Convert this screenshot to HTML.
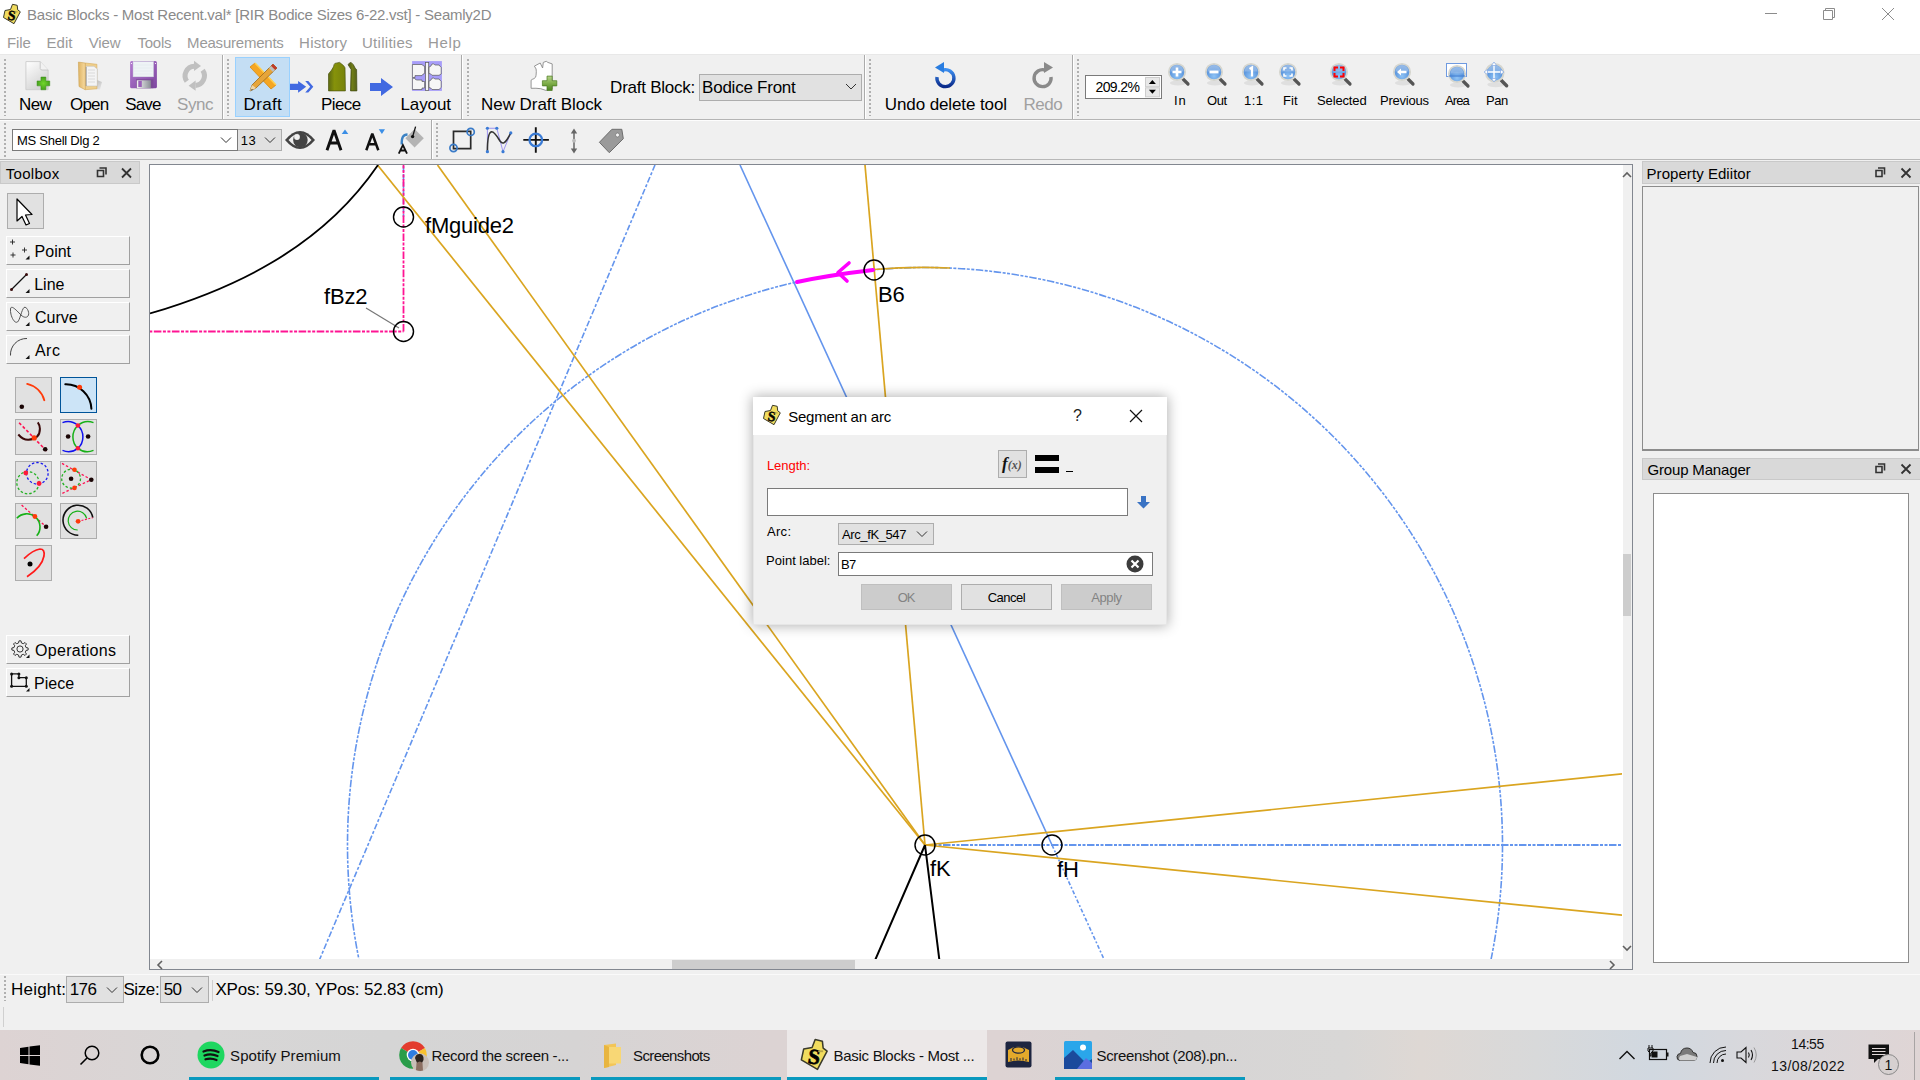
<!DOCTYPE html>
<html><head><meta charset="utf-8">
<style>
*{box-sizing:border-box;margin:0;padding:0}
html,body{width:1920px;height:1080px;overflow:hidden;background:#f0f0f0;font-family:"Liberation Sans",sans-serif;color:#000}
.a{position:absolute}
.t{position:absolute;white-space:nowrap;line-height:1}
svg{position:absolute;overflow:visible}
.grip{position:absolute;width:2px;background-image:linear-gradient(#b0b0b0 50%,transparent 50%);background-size:2px 4px;background-repeat:repeat-y}
.sep{position:absolute;width:1px;background:#ababab;box-shadow:1px 0 0 #fff}
.tb{font-size:17px}
.zl{font-size:13px}
.btn{position:absolute;background:#e1e1e1;border:1px solid #adadad}
.dbtn{position:absolute;background:#f0f0f0;border-top:1px solid #fff;border-left:1px solid #fff;border-right:1px solid #a0a0a0;border-bottom:1px solid #a0a0a0}
.ticon{position:absolute;width:37px;height:36px;background:#e1e1e1;border:1px solid #adadad}
</style></head><body>
<svg width="0" height="0" style="position:absolute">
<defs>
<symbol id="seamly" viewBox="0 0 30 30">
<path d="M3.5 17.5 L5 10.5 L10.5 9.5 L12.5 4.3 L17.2 5.3 L17.7 9.8 L20.3 11.8 L14 23.7 Z" fill="#f1dc5e" stroke="#3a3a2a" stroke-width="1" stroke-linejoin="round"/>
<text x="8" y="20" font-family="Liberation Serif" font-weight="bold" font-size="14" fill="#000" stroke="#000" stroke-width="0.5" transform="rotate(8 11 15)">S</text>
<path d="M14.5 11.9 L17.7 11.9" stroke="#b7a449" stroke-width="1.2"/>
</symbol>
</defs>
</svg>
<div class="a" style="left:0;top:0;width:1920px;height:54px;background:#fff"></div>
<div class="a" style="left:0;top:54px;width:1920px;height:1px;background:#e8e8e8"></div>
<svg style="left:0;top:0" width="30" height="30"><use href="#seamly"/></svg>
<div id="t_title" class="t" style="left:28px;top:7px;font-size:15px;color:#8a8a8a;letter-spacing:-0.24px">Basic Blocks - Most Recent.val* [RIR Bodice Sizes 6-22.vst] - Seamly2D</div>
<svg style="left:1750px;top:0" width="170" height="30">
<path d="M15 13.5 H27" stroke="#8c8c8c" stroke-width="1"/>
<path d="M73.5 10.5 h9 v9 h-9 z M75.5 10.5 v-2 h9 v9 h-2" fill="none" stroke="#8c8c8c" stroke-width="1"/>
<path d="M132 8 L144 20 M144 8 L132 20" stroke="#8c8c8c" stroke-width="1"/>
</svg>
<div id="m_file" class="t" style="left:8px;top:35px;font-size:15px;color:#9a9a9a">File</div>
<div id="m_edit" class="t" style="left:47px;top:35px;font-size:15px;color:#9a9a9a">Edit</div>
<div id="m_view" class="t" style="left:89px;top:35px;font-size:15px;color:#9a9a9a">View</div>
<div id="m_tools" class="t" style="left:137px;top:35px;font-size:15px;color:#9a9a9a">Tools</div>
<div id="m_meas" class="t" style="left:188px;top:35px;font-size:15px;color:#9a9a9a">Measurements</div>
<div id="m_hist" class="t" style="left:300px;top:35px;font-size:15px;color:#9a9a9a">History</div>
<div id="m_util" class="t" style="left:362px;top:35px;font-size:15px;color:#9a9a9a">Utilities</div>
<div id="m_help" class="t" style="left:429px;top:35px;font-size:15px;color:#9a9a9a">Help</div>
<div class="a" style="left:0;top:119px;width:1920px;height:1px;background:#b4b4b4"></div>
<div class="a" style="left:0;top:120px;width:1920px;height:1px;background:#fdfdfd"></div>
<!-- grips & separators -->
<div class="grip" style="left:4px;top:59px;height:57px"></div>
<div class="sep" style="left:222px;top:55px;height:64px"></div>
<div class="grip" style="left:227px;top:59px;height:57px"></div>
<div class="sep" style="left:461px;top:55px;height:64px"></div>
<div class="grip" style="left:467px;top:59px;height:57px"></div>
<div class="sep" style="left:864px;top:55px;height:64px"></div>
<div class="grip" style="left:869px;top:59px;height:57px"></div>
<div class="sep" style="left:1072px;top:55px;height:64px"></div>
<div class="grip" style="left:1077px;top:59px;height:57px"></div>
<!-- New -->
<svg style="left:24px;top:58px" width="30" height="34" viewBox="0 0 30 34">
<defs><linearGradient id="docg" x1="0" y1="0" x2="0.6" y2="1"><stop offset="0" stop-color="#ffffff"/><stop offset="1" stop-color="#d2d2d2"/></linearGradient>
<radialGradient id="plusr" cx="0.5" cy="0.5" r="0.6"><stop offset="0" stop-color="#72d62c"/><stop offset="1" stop-color="#3d9618"/></radialGradient></defs>
<path d="M1.9 3.6 H16.2 L24.1 12 V31.7 H1.9 Z" fill="url(#docg)" stroke="#cfcfcf" stroke-width="1"/>
<path d="M16.2 3.6 V10.5 Q16.5 12 18 12 H24.1" fill="#f2f2f2" stroke="#c4c4c4" stroke-width="0.9"/>
<path d="M16.95 19.05 h4.9 v3.9 h3.9 v4.9 h-3.9 v3.9 h-4.9 v-3.9 h-3.9 v-4.9 h3.9 z" fill="url(#plusr)" stroke="#3b8a1a" stroke-width="0.5"/>
</svg>
<!-- Open -->
<svg style="left:76px;top:58px" width="30" height="34" viewBox="0 0 30 34">
<defs><linearGradient id="fcov" x1="0" y1="0" x2="1" y2="0"><stop offset="0" stop-color="#deb466"/><stop offset="1" stop-color="#f8dba0"/></linearGradient>
<linearGradient id="shd" x1="0" y1="0" x2="1" y2="1"><stop offset="0" stop-color="#9a9a9a"/><stop offset="1" stop-color="#e8e8e8"/></linearGradient></defs>
<path d="M14 30.5 L21 22 L26 24 L24 31.5 Z" fill="url(#shd)" opacity="0.8"/>
<path d="M9.2 5 L20.9 6.3 V30.8 L9.2 31.7 Z" fill="#efcf8c" stroke="#d7ad5c" stroke-width="0.6"/>
<path d="M10 8.3 H18 L21.3 11 V28 H10 Z" fill="#f4f4f4" stroke="#b8b8b8" stroke-width="0.5"/>
<path d="M10 9 V28" stroke="#8a8a8a" stroke-width="1.6" opacity="0.6"/>
<path d="M12 12 H19 M12 15 H19 M12 18 H19 M12 21 H19 M12 24 H19" stroke="#c9c9c9" stroke-width="0.6"/>
<path d="M2.4 4.1 L9.2 5 V31.7 L3 28.5 Z" fill="url(#fcov)" stroke="#cfa456" stroke-width="0.6"/>
</svg>
<!-- Save -->
<svg style="left:129px;top:60px" width="30" height="32" viewBox="0 0 30 32">
<defs><linearGradient id="flp" x1="0" y1="0" x2="1" y2="1"><stop offset="0" stop-color="#b37bd0"/><stop offset="1" stop-color="#7d45a0"/></linearGradient>
<linearGradient id="mtl" x1="0" y1="0" x2="1" y2="0"><stop offset="0" stop-color="#f4f4f4"/><stop offset="1" stop-color="#8a8e96"/></linearGradient></defs>
<rect x="1.1" y="1" width="26.8" height="27.2" rx="1.5" fill="url(#flp)"/>
<rect x="4.1" y="1.7" width="20.3" height="15.1" fill="#eef3f6" stroke="#d8dfe4" stroke-width="0.5"/>
<path d="M5 5 H23.5 M5 8 H23.5 M5 11 H23.5 M5 14 H23.5" stroke="#dde5ea" stroke-width="0.5"/>
<rect x="7.1" y="19.3" width="17.3" height="8.9" fill="#7a4a96"/>
<rect x="7.8" y="20.3" width="14" height="7.9" fill="url(#mtl)"/>
<rect x="9.3" y="20.8" width="3.5" height="6.2" fill="#9b5fba"/>
<circle cx="2.5" cy="3.5" r="0.6" fill="#fff"/><circle cx="26.5" cy="3.5" r="0.6" fill="#fff"/>
</svg>
<!-- Sync -->
<svg style="left:179px;top:60px" width="32" height="32" viewBox="0 0 32 32">
<path d="M7.85 21.3 A9.6 9.6 0 0 1 15.3 6.2" fill="none" stroke="#c0c0c0" stroke-width="5"/>
<path d="M15 0.8 L22 5.9 L15 11 Z" fill="#c0c0c0"/>
<path d="M23.65 10.3 A9.6 9.6 0 0 1 16.5 25.4" fill="none" stroke="#c0c0c0" stroke-width="5"/>
<path d="M16.6 20.6 L9.6 25.7 L16.6 30.8 Z" fill="#c0c0c0"/>
</svg>
<div id="l_new" class="t tb" style="left:20px;top:96px">New</div>
<div id="l_open" class="t tb" style="left:70px;top:96px">Open</div>
<div id="l_save" class="t tb" style="left:126px;top:96px">Save</div>
<div id="l_sync" class="t tb" style="left:178px;top:96px;color:#a0a0a0">Sync</div>
<!-- Draft -->
<div class="a" style="left:235px;top:57px;width:55px;height:60px;background:#c4def4;border:1px solid #99d1ff"></div>
<svg style="left:247px;top:61px" width="32" height="32" viewBox="0 0 32 32">
<path d="M3 6 L8 2 L29 24 L24 28 Z" fill="#f5a623" stroke="#d9890f" stroke-width="0.8"/>
<path d="M8 2 L29 24" stroke="#ffd050" stroke-width="1.5"/>
<path d="M26 3 L30 7 L9 27 L3 30 L5 24 Z" fill="#e6a53a" stroke="#9b6a1d" stroke-width="0.8"/>
<path d="M26 3 L30 7 L28 9 L24 5 Z" fill="#c0392b"/>
<path d="M24 5 L28 9 L26 11 L22 7 Z" fill="#bdbdbd"/>
<path d="M5 24 L9 27 L3 30 Z" fill="#f0d6a8"/>
<path d="M3.5 29.5 L5 28 L6 29 Z" fill="#333"/>
</svg>
<div id="l_draft" class="t tb" style="left:244px;top:96px">Draft</div>
<svg style="left:289px;top:79px" width="26" height="16" viewBox="0 0 26 16">
<path d="M1 4.8 H9.1 V1.9 L17.2 7.85 L9.1 13.8 V11.1 H1 Z" fill="#4169e1"/>
<path d="M16.2 2.1 H19.3 L24.3 7.85 L19.3 13.6 H16.2 L21.2 7.85 Z" fill="#4169e1"/>
</svg>
<!-- Piece -->
<svg style="left:327px;top:61px" width="32" height="32" viewBox="0 0 32 32">
<defs><linearGradient id="olv" x1="0" y1="0" x2="1" y2="0"><stop offset="0" stop-color="#5d6a12"/><stop offset="0.35" stop-color="#86920a"/><stop offset="1" stop-color="#77820c"/></linearGradient>
<linearGradient id="olv2" x1="0" y1="0" x2="1" y2="0"><stop offset="0" stop-color="#4f5a14"/><stop offset="0.5" stop-color="#6f7c18"/><stop offset="1" stop-color="#56621a"/></linearGradient></defs>
<path d="M1.5 29.9 V12.9 Q5 9 6.5 5.8 Q7 3 7.9 2.4 L12.6 1.4 L14.7 3.1 Q17 4.5 18 6.8 L18.4 29.9 Z" fill="url(#olv)" stroke="#4e5610" stroke-width="0.7"/>
<path d="M21.1 3.8 Q22 1.5 24.1 1.4 Q26.5 3 28.2 7.2 L29.6 8.5 L29.9 29.9 H23.5 L24.1 8.5 Q22.5 6 21.1 3.8 Z" fill="url(#olv2)" stroke="#3f4710" stroke-width="0.7"/>
</svg>
<div id="l_piece" class="t tb" style="left:322px;top:96px">Piece</div>
<svg style="left:369px;top:77px" width="26" height="20" viewBox="0 0 26 20">
<path d="M1 6 H12 V1 L24 10 L12 19 V14 H1 Z" fill="#4169e1"/>
</svg>
<!-- Layout -->
<svg style="left:411px;top:60px" width="32" height="32" viewBox="0 0 32 32">
<rect x="1.1" y="1.1" width="29.8" height="29.8" fill="#a79df9"/>
<path d="M1.4 4.5 H11 Q12 6 13.6 6 V13.5 Q12 13.5 11 15.6 H4 V17.5 H1.4 Z" fill="#f6f6f6" stroke="#5a5a5a" stroke-width="0.7"/>
<path d="M1.4 18.3 H4 Q4 20 6 20 H11 V21.5 H13.6 V28 H11 V29.5 H1.4 Z" fill="#f6f6f6" stroke="#5a5a5a" stroke-width="0.7"/>
<rect x="14.6" y="2.4" width="3.1" height="28.1" fill="#f6f6f6" stroke="#5a5a5a" stroke-width="0.7"/>
<path d="M18 7 Q20 7 21 4 Q23 3.4 24 5 H28 L30.2 7.5 V14 L28 15.3 H21 Q20 13.5 18 13.5 Z" fill="#f6f6f6" stroke="#5a5a5a" stroke-width="0.7"/>
<path d="M18 21 Q20 21 21 18.2 Q23 17.5 24 19 H28 L30.2 21.5 V27.5 L28 29.5 H21 Q20 27.5 18 27.5 Z" fill="#f6f6f6" stroke="#5a5a5a" stroke-width="0.7"/>
</svg>
<div id="l_layout" class="t tb" style="left:402px;top:96px">Layout</div>
<!-- New Draft Block -->
<svg style="left:528px;top:58px" width="34" height="36" viewBox="0 0 34 36">
<defs><linearGradient id="plusg" x1="0" y1="0" x2="0" y2="1"><stop offset="0" stop-color="#b5d38a"/><stop offset="0.5" stop-color="#7fae4a"/><stop offset="1" stop-color="#4b8420"/></linearGradient></defs>
<path d="M3.1 22.2 V30.3 Q8 30 12.7 30.7 L17.9 32.4 L24.2 31 V5.9 L19.8 4.4 L18.3 3.3 L15.3 4.4 L14.6 10 L12.2 5 L6.4 8.1 Q8.8 11 8.3 13.7 Q8.2 18 7.6 19.2 Q6 21 4.2 21.4 Z" fill="#fff" stroke="#8a8a8a" stroke-width="0.9" stroke-linejoin="round"/>
<path d="M19 18.1 H24.2 V22.7 H28.8 V27.9 H24.2 V32.5 H19 V27.9 H14.4 V22.7 H19 Z" fill="url(#plusg)" stroke="#4a7a20" stroke-width="0.7"/>
</svg>
<div id="l_ndb" class="t tb" style="left:482px;top:96px">New Draft Block</div>
<div id="l_db" class="t tb" style="left:611px;top:79px">Draft Block:</div>
<div class="a" style="left:699px;top:74px;width:163px;height:27px;background:#e1e1e1;border:1px solid #adadad"></div>
<div id="l_bf" class="t tb" style="left:703px;top:79px">Bodice Front</div>
<svg style="left:844px;top:82px" width="14" height="10"><path d="M2 2 L7 7 L12 2" fill="none" stroke="#333" stroke-width="1"/></svg>
<!-- Undo / Redo -->
<svg style="left:932px;top:60px" width="28" height="32" viewBox="0 0 28 32">
<defs><linearGradient id="undog" x1="0" y1="0" x2="0" y2="1"><stop offset="0" stop-color="#3d8ff0"/><stop offset="1" stop-color="#0b2a8a"/></linearGradient></defs>
<path d="M11 10 A8.5 8.5 0 1 1 5 17" fill="none" stroke="url(#undog)" stroke-width="3.4"/>
<path d="M3 7.5 L12 2 L12 13 Z" fill="#2a7de0"/>
</svg>
<div id="l_undo" class="t tb" style="left:885px;top:96px">Undo delete tool</div>
<svg style="left:1028px;top:60px" width="28" height="32" viewBox="0 0 28 32">
<path d="M17 10 A8.5 8.5 0 1 0 23 17" fill="none" stroke="#8a8a8a" stroke-width="3.4"/>
<path d="M25 7.5 L16 2 L16 13 Z" fill="#8a8a8a"/>
</svg>
<div id="l_redo" class="t tb" style="left:1025px;top:96px;color:#a0a0a0">Redo</div>
<!-- zoom spin -->
<div class="a" style="left:1085px;top:75px;width:77px;height:24px;background:#fff;border:1px solid #7a7a7a"></div>
<div id="l_zoom" class="t" style="left:1096px;top:80px;font-size:14px">209.2%</div>
<svg style="left:1145px;top:77px" width="16" height="21" viewBox="0 0 16 21"><rect x="0.5" y="0.5" width="14" height="9.2" fill="#e8e8e8" stroke="#cdcdcd"/><rect x="0.5" y="10.8" width="14" height="9" fill="#e8e8e8" stroke="#cdcdcd"/><path d="M3.9 7 L7.4 3 L10.9 7 Z" fill="#000"/><path d="M3.9 12.8 L7.4 16.7 L10.9 12.8 Z" fill="#000"/></svg>
<svg width="0" height="0" style="position:absolute"><defs>
<radialGradient id="lensg" cx="0.5" cy="0.75" r="0.7"><stop offset="0" stop-color="#8fc3f5"/><stop offset="0.6" stop-color="#5e98de"/><stop offset="1" stop-color="#79a7e0"/></radialGradient>
<symbol id="mag" viewBox="0 0 26 26">
<ellipse cx="11" cy="21" rx="8" ry="2.5" fill="#000" opacity="0.07"/>
<path d="M15.5 16.5 L21 22" stroke="#555" stroke-width="3.2" stroke-linecap="round"/>
<circle cx="10" cy="10" r="8.2" fill="url(#lensg)" stroke="#d6d6cf" stroke-width="1.8"/>
<path d="M3.5 9.5 A6.5 6.5 0 0 1 16.5 9.5" fill="#fff" opacity="0.25"/>
</symbol>
</defs></svg>
<svg style="left:1167px;top:62px" width="26" height="26"><use href="#mag"/><path d="M10 5.5 V14.5 M5.5 10 H14.5" stroke="#fff" stroke-width="2.6"/></svg>
<svg style="left:1204px;top:62px" width="26" height="26"><use href="#mag"/><path d="M5.5 10 H14.5" stroke="#fff" stroke-width="2.8"/></svg>
<svg style="left:1241px;top:62px" width="26" height="26"><use href="#mag"/><path d="M8.5 7 L11 5.5 V14.5" fill="none" stroke="#fff" stroke-width="2.2"/></svg>
<svg style="left:1278px;top:62px" width="26" height="26"><use href="#mag"/><path d="M6 8.5 V6 H8.5 M11.5 6 H14 V8.5 M14 11.5 V14 H11.5 M8.5 14 H6 V11.5" fill="none" stroke="#fff" stroke-width="1.6"/></svg>
<svg style="left:1329px;top:62px" width="26" height="26"><use href="#mag"/><path d="M5.5 9 V5.5 H9 M11 5.5 H14.5 V9 M14.5 11 V14.5 H11 M9 14.5 H5.5 V11" fill="none" stroke="#f00" stroke-width="2"/></svg>
<svg style="left:1392px;top:62px" width="26" height="26"><use href="#mag"/><path d="M5 10 L9 6.5 V8.7 H14.5 V11.3 H9 V13.5 Z" fill="#fff"/></svg>
<svg style="left:1444px;top:62px" width="30" height="28"><rect x="2.5" y="1.5" width="20" height="13" fill="#fff" stroke="#6f9ae0" stroke-width="1"/><g transform="translate(3,2)"><use href="#mag" width="26" height="26"/></g><path d="M5 14 H21" stroke="#3d78cf" stroke-width="1"/></svg>
<svg style="left:1484px;top:62px" width="28" height="28"><use href="#mag"/><path d="M10 1 V19 M1 10 H19" stroke="#fff" stroke-width="1.4"/><path d="M10 0 L12.5 3.5 H7.5 Z M10 20 L12.5 16.5 H7.5 Z M0 10 L3.5 7.5 V12.5 Z M20 10 L16.5 7.5 V12.5 Z" fill="#fff" stroke="#6f9ae0" stroke-width="0.6"/></svg>
<div id="z_in" class="t zl" style="left:1175px;top:94px">In</div>
<div id="z_out" class="t zl" style="left:1207px;top:94px">Out</div>
<div id="z_11" class="t zl" style="left:1245px;top:94px">1:1</div>
<div id="z_fit" class="t zl" style="left:1284px;top:94px">Fit</div>
<div id="z_sel" class="t zl" style="left:1317px;top:94px">Selected</div>
<div id="z_prev" class="t zl" style="left:1381px;top:94px">Previous</div>
<div id="z_area" class="t zl" style="left:1445px;top:94px">Area</div>
<div id="z_pan" class="t zl" style="left:1487px;top:94px">Pan</div>
<div class="a" style="left:0;top:159px;width:1920px;height:1px;background:#b8b8b8"></div>
<div class="grip" style="left:4px;top:123px;height:35px"></div>
<div class="a" style="left:12px;top:129px;width:226px;height:22px;background:#fff;border:1px solid #7a7a7a"></div>
<div id="f_font" class="t" style="left:17px;top:134px;font-size:13px">MS Shell Dlg 2</div>
<svg style="left:219px;top:135px" width="14" height="10"><path d="M2 2.5 L7 7.5 L12 2.5" fill="none" stroke="#333" stroke-width="1"/></svg>
<div class="a" style="left:238px;top:129px;width:44px;height:22px;background:#e1e1e1;border:1px solid #adadad;border-left:none"></div>
<div id="f_size" class="t" style="left:242px;top:134px;font-size:13px">13</div>
<svg style="left:263px;top:135px" width="14" height="10"><path d="M2 2.5 L7 7.5 L12 2.5" fill="none" stroke="#333" stroke-width="1"/></svg>
<!-- eye -->
<svg style="left:284px;top:128px" width="32" height="24" viewBox="0 0 32 24">
<path d="M1 12 Q16 -6 31 12 Q16 30 1 12 Z" fill="#444"/>
<path d="M4.5 12 Q16 -1.5 27.5 12 Q16 25.5 4.5 12 Z" fill="#f0f0f0"/>
<circle cx="16.4" cy="12" r="7.3" fill="#444"/>
<circle cx="13" cy="9" r="2.9" fill="#f0f0f0"/>
</svg>
<!-- A up -->
<svg style="left:324px;top:126px" width="28" height="28" viewBox="0 0 28 28">
<path d="M3 24.3 L10 4.2 L17 24.3 M5.6 17 H14.4" fill="none" stroke="#111" stroke-width="2.9" stroke-linejoin="bevel"/>
<path d="M17.7 8 L21 3.6 L24.3 8 Z" fill="#3a8ee6"/>
</svg>
<svg style="left:362px;top:126px" width="28" height="28" viewBox="0 0 28 28">
<path d="M4.3 24.3 L10.3 7.8 L16.3 24.3 M6.5 18.3 H14.1" fill="none" stroke="#111" stroke-width="2.5" stroke-linejoin="bevel"/>
<path d="M16.75 3.3 L23 3.3 L19.9 8 Z" fill="#3a8ee6"/>
</svg>
<!-- paint -->
<svg style="left:396px;top:125px" width="32" height="32" viewBox="0 0 32 32">
<path d="M18.6 4 L27.8 13.25 L18.6 22.5 L9.4 13.25 Z" fill="#b4b4b4"/>
<path d="M19.6 1.6 L16.6 11.6" stroke="#111" stroke-width="1.3"/><circle cx="16.6" cy="11.6" r="1.7" fill="#111"/>
<path d="M5.7 19.5 C5.5 12.5 7 9.5 11.5 9.5" fill="none" stroke="#3b82c4" stroke-width="2.3"/>
<path d="M2.75 28.7 L6.9 20 L11 28.7 M4.3 25.5 H9.5" fill="none" stroke="#111" stroke-width="1.8"/>
</svg>
<div class="sep" style="left:431px;top:120px;height:39px"></div>
<div class="grip" style="left:436px;top:123px;height:35px"></div>
<!-- rect with circles -->
<svg style="left:447px;top:126px" width="30" height="30" viewBox="0 0 30 30">
<path d="M6.5 5.4 H23.7 V22.6 H6.5 Z" fill="none" stroke="#2a2a2a" stroke-width="1.7"/>
<circle cx="23.7" cy="5.9" r="3.6" fill="none" stroke="#3a7bc8" stroke-width="1.7"/>
<circle cx="6.5" cy="22" r="3.6" fill="none" stroke="#3a7bc8" stroke-width="1.7"/>
</svg>
<!-- curve -->
<svg style="left:484px;top:125px" width="30" height="32" viewBox="0 0 30 32">
<path d="M3.4 26.7 V3.25 H12.8 L19 26.7 L26.8 7.9" fill="none" stroke="#7a6cf0" stroke-width="0.7"/>
<path d="M3.4 26.7 C3.4 -2 10 6 16 16 C18.5 19.5 21 19.5 26.8 7.9" fill="none" stroke="#333" stroke-width="1.6"/>
<circle cx="3.4" cy="26.7" r="1.6" fill="#3a7bd5"/><circle cx="3.4" cy="3.25" r="1.6" fill="#3a7bd5"/><circle cx="12.8" cy="3.25" r="1.6" fill="#3a7bd5"/><circle cx="19" cy="26.7" r="1.6" fill="#3a7bd5"/><circle cx="26.8" cy="7.9" r="1.6" fill="#3a7bd5"/>
</svg>
<!-- crosshair -->
<svg style="left:521px;top:125px" width="30" height="30" viewBox="0 0 30 30">
<path d="M14.8 2.2 V27.7 M2.3 14.9 H27.9" stroke="#111" stroke-width="1.9"/>
<circle cx="14.8" cy="14.9" r="6.3" fill="none" stroke="#3a7bd5" stroke-width="2.3"/>
</svg>
<!-- vertical arrows -->
<svg style="left:566px;top:126px" width="16" height="30" viewBox="0 0 16 30">
<path d="M8 4 V26" stroke="#666" stroke-width="1.5"/>
<path d="M8 2.5 L11.2 7.5 H4.8 Z M8 27.5 L11.2 22.5 H4.8 Z" fill="#666"/>
<circle cx="8" cy="14.75" r="1.9" fill="#bbb"/>
</svg>
<!-- tag -->
<svg style="left:596px;top:126px" width="32" height="30" viewBox="0 0 32 30">
<path d="M3.4 16.3 L15.9 3.3 H25.8 L27.3 12.7 L13.3 26.7 Z" fill="#9a9a9a" stroke="#6e6e6e" stroke-width="1" stroke-linejoin="round"/>
<circle cx="21.5" cy="9" r="2" fill="#f4f4f4" stroke="#666" stroke-width="0.6"/>
</svg>
<!-- Toolbox dock -->
<div class="a" style="left:0;top:161px;width:140px;height:23px;background:#d9d9d9;border:1px solid #c9c9c9"></div>
<div id="d_tb" class="t" style="left:6px;top:166px;font-size:15px;color:#000">Toolbox</div>
<svg style="left:94px;top:166px" width="40" height="14" viewBox="0 0 40 14">
<path d="M3.5 4.5 h6 v6 h-6 z" fill="none" stroke="#333" stroke-width="1.6"/>
<path d="M5.5 2 h6.5 v6.5" fill="none" stroke="#333" stroke-width="1.6"/>
<path d="M28 2.5 L37 11.5 M37 2.5 L28 11.5" stroke="#333" stroke-width="1.8"/>
</svg>
<div class="btn" style="left:7px;top:193px;width:37px;height:36px"></div>
<svg style="left:14px;top:196px" width="24" height="32" viewBox="0 0 24 32">
<path d="M3 3 L3 25 L8 20.5 L12 29 L15.5 27.5 L11.5 19 L18 18.5 Z" fill="#fff" stroke="#000" stroke-width="1.2" stroke-linejoin="round"/>
</svg>
<!-- Point / Line / Curve / Arc -->
<div class="dbtn" style="left:6px;top:236px;width:124px;height:29px"></div>
<div class="dbtn" style="left:6px;top:269px;width:124px;height:29px"></div>
<div class="dbtn" style="left:6px;top:302px;width:124px;height:29px"></div>
<div class="dbtn" style="left:6px;top:335px;width:124px;height:29px"></div>
<svg style="left:6px;top:236px" width="30" height="29" viewBox="0 0 30 29">
<path d="M6.5 3.5 v5 M4 6 h5 M7 16.5 v5 M4.5 19 h5 M18.5 11.5 v5 M16 14 h5" stroke="#222" stroke-width="0.9"/>
<path d="M19.5 23.5 L23.5 19.5 V23.5 Z" fill="#111"/>
</svg>
<svg style="left:6px;top:269px" width="30" height="29" viewBox="0 0 30 29">
<path d="M5.5 20.5 L20.5 5.5" stroke="#111" stroke-width="1.2"/><circle cx="5.5" cy="20.5" r="1.5" fill="#3b0d0d"/><circle cx="20.5" cy="5.5" r="1.5" fill="#3b0d0d"/>
<path d="M19.5 24 L23.5 20 V24 Z" fill="#111"/>
</svg>
<svg style="left:6px;top:302px" width="30" height="29" viewBox="0 0 30 29">
<path d="M4.5 7 C4 13 8 22 11.5 20 C14 18 15.5 8 18 5.5 C20.5 4 23.5 10 22.5 13 C21.5 16 18 16 15 13 C11 9 5 2 4.5 7 Z" fill="none" stroke="#444" stroke-width="0.9"/>
<path d="M19.5 24 L23.5 20 V24 Z" fill="#111"/>
</svg>
<svg style="left:6px;top:335px" width="30" height="29" viewBox="0 0 30 29">
<path d="M4.5 20.5 A16 16 0 0 1 21 3.5" fill="none" stroke="#444" stroke-width="1"/>
<path d="M19.5 24 L23.5 20 V24 Z" fill="#111"/>
</svg>
<div id="b_point" class="t" style="left:35px;top:244px;font-size:16px">Point</div>
<div id="b_line" class="t" style="left:34px;top:277px;font-size:16px">Line</div>
<div id="b_curve" class="t" style="left:35px;top:310px;font-size:16px">Curve</div>
<div id="b_arc" class="t" style="left:35px;top:343px;font-size:16px">Arc</div>
<!-- arc tools grid -->
<div class="ticon" style="left:15px;top:377px"></div>
<div class="ticon" style="left:60px;top:377px;background:#cce4f7;border:1px solid #005499"></div>
<div class="ticon" style="left:15px;top:419px"></div>
<div class="ticon" style="left:60px;top:419px"></div>
<div class="ticon" style="left:15px;top:461px"></div>
<div class="ticon" style="left:60px;top:461px"></div>
<div class="ticon" style="left:15px;top:503px"></div>
<div class="ticon" style="left:60px;top:503px"></div>
<div class="ticon" style="left:15px;top:545px"></div>
<svg style="left:15px;top:377px" width="37" height="36" viewBox="0 0 37 36">
<path d="M12.2 6.9 A23.4 23.4 0 0 1 29.3 23.2" fill="none" stroke="#ff3b0a" stroke-width="1.9" stroke-linecap="round"/>
<circle cx="6.8" cy="29.7" r="2.3" fill="#1a0505"/>
</svg>
<svg style="left:60px;top:377px" width="37" height="36" viewBox="0 0 37 36">
<path d="M5.3 7.3 A25.5 25.5 0 0 1 31.4 31.8" fill="none" stroke="#000" stroke-width="2" stroke-linecap="round"/>
<circle cx="19.6" cy="10.2" r="2.5" fill="#ff3b0a"/>
</svg>
<svg style="left:15px;top:419px" width="37" height="36" viewBox="0 0 37 36">
<path d="M4.1 3.7 L33 33.4" stroke="#ff1050" stroke-width="1.6" stroke-dasharray="3 2.2"/>
<path d="M3.3 15.5 Q8 21 13.4 20.8 Q25 20 24.9 9.8 Q24.8 6 22.8 3.3" fill="none" stroke="#3a0808" stroke-width="2"/>
<circle cx="19.2" cy="18.9" r="2.6" fill="#ff3b0a"/>
<circle cx="30.2" cy="30.2" r="2.3" fill="#1a0505"/>
</svg>
<svg style="left:60px;top:419px" width="37" height="36" viewBox="0 0 37 36">
<path d="M2.5 3.6 A15.5 15.5 0 0 1 17.9 6.5 A15.5 15.5 0 0 1 17.9 29.3 A15.5 15.5 0 0 1 2.5 31.4" fill="none" stroke="#1010ee" stroke-width="1.5"/>
<path d="M33.5 3.6 A15.5 15.5 0 0 0 17.9 6.5 A15.5 15.5 0 0 0 17.9 29.3 A15.5 15.5 0 0 0 33.5 31.4" fill="none" stroke="#17b017" stroke-width="1.5"/>
<circle cx="17.9" cy="6.5" r="2.3" fill="#ff1a3a"/><circle cx="17.9" cy="29.3" r="2.3" fill="#ff1a3a"/>
<circle cx="8.1" cy="17.5" r="2.3" fill="#1a0505"/><circle cx="28.1" cy="17.5" r="2.3" fill="#1a0505"/>
</svg>
<svg style="left:15px;top:461px" width="37" height="36" viewBox="0 0 37 36">
<circle cx="12.9" cy="21.7" r="11.1" fill="none" stroke="#22b022" stroke-width="1.3" stroke-dasharray="2.5 2"/>
<circle cx="22.3" cy="12.3" r="10.8" fill="none" stroke="#1a1aee" stroke-width="1.3" stroke-dasharray="2.5 2"/>
<circle cx="10.8" cy="12" r="2.4" fill="#ff1a3a"/><circle cx="24.1" cy="22.5" r="2.4" fill="#ff1a3a"/>
</svg>
<svg style="left:60px;top:461px" width="37" height="36" viewBox="0 0 37 36">
<path d="M2 2.4 L31.3 18.7 L2 32.5" fill="none" stroke="#ff1050" stroke-width="1.3" stroke-dasharray="2.5 2"/>
<circle cx="11.1" cy="17.7" r="9.4" fill="none" stroke="#22b022" stroke-width="1.3" stroke-dasharray="2.5 2"/>
<circle cx="11.1" cy="17.7" r="2.3" fill="#1a0505"/><circle cx="31.3" cy="18.7" r="2.3" fill="#1a0505"/>
<circle cx="14.5" cy="8.8" r="2.3" fill="#ff3b0a"/><circle cx="14.5" cy="26.9" r="2.3" fill="#ff3b0a"/>
</svg>
<svg style="left:15px;top:503px" width="37" height="36" viewBox="0 0 37 36">
<path d="M6.6 2 L31.1 23.7" stroke="#ff1050" stroke-width="1.3" stroke-dasharray="2.5 2"/>
<path d="M1.8 15.3 A12 12 0 0 1 21.7 32.8" fill="none" stroke="#17b017" stroke-width="1.6"/>
<circle cx="19.9" cy="13.5" r="2.4" fill="#ff3b0a"/><circle cx="31.1" cy="23.7" r="2.3" fill="#1a0505"/>
</svg>
<svg style="left:60px;top:503px" width="37" height="36" viewBox="0 0 37 36">
<path d="M32.8 14.7 A15 15 0 1 0 18.3 32.2" fill="none" stroke="#111" stroke-width="1.6"/>
<path d="M26.7 15.3 A9.4 9.4 0 1 0 17.7 27" fill="none" stroke="#17b017" stroke-width="1.2"/>
<path d="M18.1 18.3 L32.8 14.7" stroke="#ff1050" stroke-width="1.1" stroke-dasharray="2 1.5"/>
<circle cx="18.1" cy="18.3" r="2.4" fill="#ff3b0a"/>
</svg>
<svg style="left:15px;top:545px" width="37" height="36" viewBox="0 0 37 36">
<path d="M9 13.6 Q18 5 25 4 Q30 4 29 11 Q27 22 12 31.7" fill="none" stroke="#ff1a1a" stroke-width="1.7"/>
<circle cx="15" cy="19" r="2.5" fill="#000"/>
</svg>
<!-- Operations / Piece -->
<div class="dbtn" style="left:6px;top:635px;width:124px;height:29px"></div>
<div class="dbtn" style="left:6px;top:668px;width:124px;height:29px"></div>
<svg style="left:10px;top:640px" width="22" height="22" viewBox="0 0 22 22">
<path d="M18.14 7.97 L18.14 10.03 L16.03 10.45 L15.29 12.24 L16.48 14.03 L15.03 15.48 L13.24 14.29 L11.45 15.03 L11.03 17.14 L8.97 17.14 L8.55 15.03 L6.76 14.29 L4.97 15.48 L3.52 14.03 L4.71 12.24 L3.97 10.45 L1.86 10.03 L1.86 7.97 L3.97 7.55 L4.71 5.76 L3.52 3.97 L4.97 2.52 L6.76 3.71 L8.55 2.97 L8.97 0.86 L11.03 0.86 L11.45 2.97 L13.24 3.71 L15.03 2.52 L16.48 3.97 L15.29 5.76 L16.03 7.55 Z" fill="none" stroke="#333" stroke-width="1" stroke-linejoin="round"/><circle cx="10" cy="9" r="3.1" fill="none" stroke="#333" stroke-width="1"/>
<path d="M16 18 L19.5 14.5 V18 Z" fill="#111"/>
</svg>
<svg style="left:10px;top:670px" width="22" height="24" viewBox="0 0 22 24">
<path d="M1.6 3.9 H8.9 V7.7 H16.3 V16.3 H1.6 Z" fill="none" stroke="#111" stroke-width="1.3"/>
<circle cx="1.6" cy="3.9" r="1.5" fill="#111"/><circle cx="8.9" cy="3.9" r="1.5" fill="#111"/><circle cx="8.9" cy="7.7" r="1.5" fill="#111"/><circle cx="16.3" cy="7.7" r="1.5" fill="#111"/><circle cx="16.3" cy="16.3" r="1.5" fill="#111"/><circle cx="1.6" cy="16.3" r="1.5" fill="#111"/>
<path d="M16 21.5 L19.5 18 V21.5 Z" fill="#111"/>
</svg>
<div id="b_ops" class="t" style="left:35px;top:643px;font-size:16px">Operations</div>
<div id="b_piece" class="t" style="left:35px;top:676px;font-size:16px">Piece</div>
<!-- canvas -->
<div class="a" style="left:149px;top:164px;width:1484px;height:806px;background:#f0f0f0;border:1px solid #828790"></div>
<svg style="left:0;top:0" width="1920" height="1080">
<defs><clipPath id="cv"><rect x="150" y="165" width="1472" height="794"/></clipPath></defs>
<rect x="150" y="165" width="1473" height="794" fill="#fff"/>
<g clip-path="url(#cv)" fill="none">
<!-- big dash-dot circle -->
<circle cx="925" cy="845" r="577.5" stroke="#6495ed" stroke-width="1.6" stroke-dasharray="7.5 1.5 3 1.5 3 1.5"/>
<!-- blue dashed lines -->
<path d="M655 165 L316 968" stroke="#6495ed" stroke-width="1.6" stroke-dasharray="6 2 3 2"/>
<path d="M403.5 150 L403.5 217" stroke="#6495ed" stroke-width="1.6" stroke-dasharray="6 2"/>
<path d="M740 165 L1052 845" stroke="#6495ed" stroke-width="1.6"/>
<path d="M1052 845 L1108 968" stroke="#6495ed" stroke-width="1.6" stroke-dasharray="4 2 2 2"/>
<path d="M925 845 L1630 845" stroke="#6495ed" stroke-width="2" stroke-dasharray="7.5 1.5 3 1.5 3 1.5"/>
<!-- magenta dash-dot -->
<path d="M403.5 331.5 L403.5 150" stroke="#ff1493" stroke-width="1.8" stroke-dasharray="7.6 1.5 3 1.5 3 1.5"/>
<path d="M150 331.5 L403.5 331.5" stroke="#ff1493" stroke-width="1.8" stroke-dasharray="7.6 1.5 3 1.5 3 1.5" stroke-dashoffset="14.3"/>
<!-- orange lines -->
<g stroke="#daa520" stroke-width="1.7">
<path d="M377.5 165 L925 845"/>
<path d="M437.5 165 L925 845"/>
<path d="M865 165 L925 845"/>
<path d="M925 845 L1625 773.5"/>
<path d="M925 845 L1625 915.5"/>
<path d="M874 269.5 A577.5 577.5 0 0 1 950 268"/>
</g>
<!-- black curve -->
<path d="M150 313.5 C230 290 320 250 378 165" stroke="#000" stroke-width="1.8"/>
<path d="M925 845 L873 965 M925 845 L940 965" stroke="#000" stroke-width="2"/>
<!-- leader -->
<path d="M366 308 L399 328" stroke="#777" stroke-width="1.2"/>
<!-- magenta arrow -->
<path d="M797 282 Q830 275 873 270" stroke="#ff00ff" stroke-width="4" stroke-linecap="round"/>
<path d="M849 263 L838 272.5 L847 281" stroke="#ff00ff" stroke-width="3.6" stroke-linecap="round" stroke-linejoin="round"/>
<!-- circles -->
<g stroke="#000" stroke-width="1.45">
<circle cx="403.5" cy="217" r="10"/>
<circle cx="403.5" cy="331.5" r="10"/>
<circle cx="874" cy="270" r="10"/>
<circle cx="925" cy="845" r="10"/>
<circle cx="1052" cy="845" r="10"/>
</g>
</g>
<g font-family="Liberation Sans" font-size="22" fill="#000" letter-spacing="-0.2">
<text x="425" y="233">fMguide2</text>
<text x="324" y="304">fBz2</text>
<text x="878" y="302">B6</text>
<text x="930" y="876">fK</text>
<text x="1057" y="877">fH</text>
</g>
</svg>
<!-- scrollbars -->
<div class="a" style="left:1623px;top:165px;width:9px;height:794px;background:#f0f0f0"></div>
<div class="a" style="left:150px;top:959px;width:1482px;height:10px;background:#f0f0f0"></div>
<div class="a" style="left:1623px;top:554px;width:8px;height:62px;background:#cdcdcd"></div>
<div class="a" style="left:672px;top:960px;width:183px;height:9px;background:#cdcdcd"></div>
<svg style="left:1620px;top:168px" width="14" height="14"><path d="M3 9 L7 5 L11 9" fill="none" stroke="#606060" stroke-width="1.6"/></svg>
<svg style="left:1620px;top:941px" width="14" height="14"><path d="M3 5 L7 9 L11 5" fill="none" stroke="#606060" stroke-width="1.6"/></svg>
<svg style="left:153px;top:958px" width="14" height="14"><path d="M9 3 L5 7 L9 11" fill="none" stroke="#606060" stroke-width="1.6"/></svg>
<svg style="left:1605px;top:958px" width="14" height="14"><path d="M5 3 L9 7 L5 11" fill="none" stroke="#606060" stroke-width="1.6"/></svg>
<!-- right docks -->
<div class="a" style="left:1642px;top:161px;width:278px;height:23px;background:#d9d9d9;border:1px solid #c9c9c9;border-right:none"></div>
<div id="d_pe" class="t" style="left:1647px;top:166px;font-size:15px">Property Ediitor</div>
<svg style="left:1872px;top:166px" width="48" height="14" viewBox="0 0 48 14">
<path d="M4 4.5 h6 v6 h-6 z" fill="none" stroke="#333" stroke-width="1.6"/>
<path d="M6 2 h6.5 v6.5" fill="none" stroke="#333" stroke-width="1.6"/>
<path d="M29.5 2.5 L38.5 11.5 M38.5 2.5 L29.5 11.5" stroke="#333" stroke-width="1.8"/>
</svg>
<div class="a" style="left:1642px;top:186px;width:277px;height:265px;background:#f0f0f0;border:1px solid #8c8c8c;border-bottom:2px solid #8c8c8c"></div>
<div class="a" style="left:1642px;top:458px;width:278px;height:22px;background:#d9d9d9;border:1px solid #c9c9c9;border-right:none"></div>
<div id="d_gm" class="t" style="left:1647px;top:462px;font-size:15px">Group Manager</div>
<svg style="left:1872px;top:462px" width="48" height="14" viewBox="0 0 48 14">
<path d="M4 4.5 h6 v6 h-6 z" fill="none" stroke="#333" stroke-width="1.6"/>
<path d="M6 2 h6.5 v6.5" fill="none" stroke="#333" stroke-width="1.6"/>
<path d="M29.5 2.5 L38.5 11.5 M38.5 2.5 L29.5 11.5" stroke="#333" stroke-width="1.8"/>
</svg>
<div class="a" style="left:1653px;top:493px;width:256px;height:470px;background:#fff;border:1px solid #8c8c8c"></div>
<!-- dialog -->
<div class="a" style="left:753px;top:397px;width:414px;height:228px;background:#f0f0f0;box-shadow:0 0 12px 1px rgba(0,0,0,0.3);border:1px solid #e6e6e6"></div>
<div class="a" style="left:753px;top:397px;width:414px;height:38px;background:#fff"></div>
<svg style="left:760px;top:401px" width="30" height="30"><use href="#seamly"/></svg>
<div id="g_title" class="t" style="left:788px;top:409px;font-size:15px">Segment an arc</div>
<div class="t" style="left:1073px;top:408px;font-size:16px;color:#222">?</div>
<svg style="left:1126px;top:406px" width="20" height="20"><path d="M4 4 L16 16 M16 4 L4 16" stroke="#111" stroke-width="1.2"/></svg>
<div id="g_len" class="t" style="left:767px;top:459px;font-size:13px;color:#f00">Length:</div>
<div class="a" style="left:998px;top:450px;width:29px;height:28px;background:#e1e1e1;border:1px solid #adadad"></div>
<div class="t" style="left:1002px;top:455px;font-family:'Liberation Serif',serif;font-style:italic;font-weight:bold;font-size:17px;color:#111">f<span style="font-size:12px;color:#555">(x)</span></div>
<div class="a" style="left:1035px;top:455px;width:24px;height:6px;background:#000"></div>
<div class="a" style="left:1035px;top:467px;width:24px;height:6px;background:#000"></div>
<div class="a" style="left:1066px;top:471px;width:7px;height:1px;background:#000"></div>
<div class="a" style="left:767px;top:488px;width:361px;height:28px;background:#fff;border:1px solid #7a7a7a"></div>
<svg style="left:1136px;top:494px" width="16" height="18" viewBox="0 0 16 18"><path d="M5 2 H10 V8 H14 L7.5 14.5 L1 8 H5 Z" fill="#3a73c4"/></svg>
<div id="g_arc" class="t" style="left:767px;top:525px;font-size:13px">Arc:</div>
<div class="a" style="left:838px;top:523px;width:96px;height:22px;background:#e1e1e1;border:1px solid #adadad"></div>
<div id="g_arcv" class="t" style="left:842px;top:528px;font-size:13px">Arc_fK_547</div>
<svg style="left:915px;top:529px" width="14" height="10"><path d="M2 2.5 L7 7.5 L12 2.5" fill="none" stroke="#333" stroke-width="1"/></svg>
<div id="g_pl" class="t" style="left:767px;top:554px;font-size:13px">Point label:</div>
<div class="a" style="left:838px;top:552px;width:315px;height:24px;background:#fff;border:1px solid #7a7a7a"></div>
<div id="g_b7" class="t" style="left:841px;top:558px;font-size:13px">B7</div>
<svg style="left:1125px;top:555px" width="20" height="18" viewBox="0 0 20 18"><circle cx="10" cy="9" r="8.5" fill="#3c3c3c"/><path d="M6.5 5.5 L13.5 12.5 M13.5 5.5 L6.5 12.5" stroke="#fff" stroke-width="2.2"/></svg>
<div class="a" style="left:861px;top:584px;width:91px;height:26px;background:#cccccc;border:1px solid #bfbfbf"></div>
<div id="g_ok" class="t" style="left:861px;top:591px;width:91px;text-align:center;font-size:13px;color:#838383">OK</div>
<div class="a" style="left:961px;top:584px;width:91px;height:26px;background:#e1e1e1;border:1px solid #adadad"></div>
<div id="g_cancel" class="t" style="left:961px;top:591px;width:91px;text-align:center;font-size:13px">Cancel</div>
<div class="a" style="left:1061px;top:584px;width:91px;height:26px;background:#cccccc;border:1px solid #bfbfbf"></div>
<div id="g_apply" class="t" style="left:1061px;top:591px;width:91px;text-align:center;font-size:13px;color:#838383">Apply</div>
<!-- status bar -->
<div class="a" style="left:0;top:974px;width:1920px;height:1px;background:#fafafa"></div>
<div class="grip" style="left:4px;top:976px;height:25px"></div>
<div id="s_h" class="t" style="left:12px;top:981px;font-size:17px">Height:</div>
<div class="a" style="left:66px;top:976px;width:58px;height:27px;background:#e1e1e1;border:1px solid #adadad"></div>
<div id="s_176" class="t" style="left:70px;top:981px;font-size:17px">176</div>
<svg style="left:105px;top:985px" width="14" height="10"><path d="M2 2.5 L7 7.5 L12 2.5" fill="none" stroke="#333" stroke-width="1"/></svg>
<div id="s_size" class="t" style="left:124px;top:981px;font-size:17px">Size:</div>
<div class="a" style="left:160px;top:976px;width:49px;height:27px;background:#e1e1e1;border:1px solid #adadad"></div>
<div id="s_50" class="t" style="left:164px;top:981px;font-size:17px">50</div>
<svg style="left:190px;top:985px" width="14" height="10"><path d="M2 2.5 L7 7.5 L12 2.5" fill="none" stroke="#333" stroke-width="1"/></svg>
<div class="a" style="left:212px;top:980px;width:1px;height:21px;background:#cfcfcf"></div>
<div id="s_pos" class="t" style="left:215px;top:981px;font-size:17px">XPos: 59.30, YPos: 52.83 (cm)</div>
<div class="a" style="left:3px;top:1007px;width:1px;height:20px;background:#d0d0d0"></div>
<!-- taskbar -->
<div class="a" style="left:0;top:1030px;width:1920px;height:50px;background:linear-gradient(90deg,#ddd3d3 0%,#d8d6d6 10%,#d5d5d5 20%,#d6d4d4 30%,#dcd3d3 40%,#ddd3d3 52%,#d7d5d5 62%,#d8d7d6 70%,#ded8d4 74%,#d8d9da 80%,#d1d8e0 86%,#d8d8dc 91%,#dfd5d5 100%)"></div>
<div class="a" style="left:787px;top:1030px;width:200px;height:50px;background:#ece8e8"></div>
<!-- windows logo -->
<svg style="left:19px;top:1045px" width="22" height="21" viewBox="0 0 22 21"><path d="M1 3 L9.5 1.8 V10 H1 Z M10.5 1.6 L21 0.2 V10 H10.5 Z M1 11 H9.5 V19.2 L1 18 Z M10.5 11 H21 V20.8 L10.5 19.4 Z" fill="#000"/></svg>
<svg style="left:79px;top:1044px" width="22" height="22" viewBox="0 0 22 22"><circle cx="13" cy="9" r="6.8" fill="none" stroke="#000" stroke-width="1.5"/><path d="M8 14 L1.5 20.5" stroke="#000" stroke-width="1.6"/></svg>
<svg style="left:139px;top:1044px" width="22" height="22" viewBox="0 0 22 22"><circle cx="11" cy="11" r="8.3" fill="none" stroke="#000" stroke-width="2.6"/></svg>
<!-- spotify -->
<svg style="left:197px;top:1041px" width="28" height="28" viewBox="0 0 28 28"><circle cx="14" cy="14" r="13.5" fill="#1ed760"/><path d="M6.5 10.5 Q14 7.5 21.5 11 M7.5 14.5 Q14 12 20.5 15 M8.5 18.3 Q14 16.5 19.5 19" fill="none" stroke="#111" stroke-width="2.2" stroke-linecap="round"/></svg>
<div id="k_spot" class="t" style="left:231px;top:1048px;font-size:15px;color:#111">Spotify Premium</div>
<div class="a" style="left:189px;top:1077px;width:190px;height:3px;background:#0a99be"></div>
<!-- chrome -->
<svg style="left:399px;top:1041px" width="34" height="34" viewBox="0 0 34 34"><path d="M14 14 L2.05 7.10 A13.8 13.8 0 0 1 25.95 7.10 Z" fill="#e33b2e"/><path d="M14 14 L25.95 7.10 A13.8 13.8 0 0 1 14.00 27.80 Z" fill="#f9c12e"/><path d="M14 14 L14.00 27.80 A13.8 13.8 0 0 1 2.05 7.10 Z" fill="#2a9d4a"/><circle cx="14" cy="14" r="6.3" fill="#fff"/><circle cx="14" cy="14" r="5" fill="#2f7de1"/><circle cx="21" cy="21.3" r="9" fill="#c9bfb8"/><path d="M16 17 Q17 12.5 21 13 Q25 13.5 24.5 19 L23 22 L18 22 Z" fill="#2e241f"/><path d="M17.5 22 Q21 19 23.5 22 L24 29.5 Q21 30.5 17 29 Z" fill="#8c6f62"/></svg>
<div id="k_rec" class="t" style="left:432px;top:1048px;font-size:15px;color:#111">Record the screen -...</div>
<div class="a" style="left:390px;top:1077px;width:190px;height:3px;background:#0a99be"></div>
<!-- folder -->
<svg style="left:603px;top:1042px" width="20" height="28" viewBox="0 0 20 28"><path d="M1 3 L13 1.5 V23 L1 26 Z" fill="#f3c557"/><path d="M5 5 H18 V21.5 H5 Z" fill="#f8d775"/><path d="M1 3 L6 5 V25 L1 26 Z" fill="#e8b540"/></svg>
<div id="k_shots" class="t" style="left:632px;top:1048px;font-size:15px;color:#111">Screenshots</div>
<div class="a" style="left:591px;top:1077px;width:190px;height:3px;background:#0a99be"></div>
<!-- seamly -->
<svg style="left:796px;top:1033px" width="46" height="46" viewBox="0 0 30 30"><use href="#seamly"/></svg>
<div id="k_bb" class="t" style="left:834px;top:1048px;font-size:15px;color:#111">Basic Blocks - Most ...</div>
<div class="a" style="left:787px;top:1077px;width:200px;height:3px;background:#0a99be"></div>
<!-- tape measure -->
<svg style="left:1005px;top:1041px" width="27" height="27" viewBox="0 0 27 27"><rect x="0.5" y="0.5" width="26" height="26" rx="2" fill="#1d2540"/><path d="M3 9 Q13.5 2 24 9 V21 Q13.5 18 3 21 Z" fill="#e3a92b"/><ellipse cx="13.5" cy="9" rx="6" ry="3.2" fill="none" stroke="#1d2540" stroke-width="1.3"/><path d="M6 20 v-3 M9 19.5 v-2 M12 19.2 v-3 M15 19.2 v-2 M18 19.5 v-3 M21 20 v-2" stroke="#1d2540" stroke-width="1"/></svg>
<!-- photos -->
<svg style="left:1064px;top:1041px" width="28" height="28" viewBox="0 0 28 28"><rect x="0" y="0" width="28" height="28" rx="1.5" fill="#2aa6ea"/><path d="M0 28 V17 L9 9 L22 22 L28 18 V28 Z" fill="#1b4a9c"/><path d="M13 28 L22 17 L28 22 V28 Z" fill="#5b6ee0"/><circle cx="19" cy="6.5" r="3" fill="#fff"/></svg>
<div id="k_ss" class="t" style="left:1097px;top:1048px;font-size:15px;color:#111">Screenshot (208).pn...</div>
<div class="a" style="left:1055px;top:1077px;width:190px;height:3px;background:#0a99be"></div>
<!-- tray -->
<svg style="left:1617px;top:1048px" width="20" height="14"><path d="M2.5 11 L10 3.5 L17.5 11" fill="none" stroke="#111" stroke-width="1.4"/></svg>
<svg style="left:1646px;top:1044px" width="24" height="18" viewBox="0 0 24 18"><path d="M3 1 v3 M6 1 v3 M2 4 h5 v3 l-2 2 v3 h-1 v-3 l-2-2 Z" fill="none" stroke="#111" stroke-width="1"/><rect x="3.5" y="5.5" width="17" height="10" fill="none" stroke="#111" stroke-width="1.2"/><rect x="5.5" y="7.5" width="6" height="6" fill="#111"/><rect x="20.5" y="8.5" width="2" height="4" fill="#111"/></svg>
<svg style="left:1676px;top:1046px" width="22" height="16" viewBox="0 0 22 16"><path d="M4 14.5 Q0.5 14 1 10.5 Q1.5 7.5 4.5 7.5 Q5.5 2 11 2 Q15.5 2 17 6.5 Q21 6.5 21 10.5 Q21 14.5 17 14.5 Z" fill="#7a7a7a" stroke="#333" stroke-width="1"/><path d="M4 14.5 Q2 13 4 10 L11 8 L21 11 Q21 14.5 17 14.5 Z" fill="#cfcfcf"/></svg>
<svg style="left:1708px;top:1045px" width="20" height="20" viewBox="0 0 20 20"><path d="M2 18 A16 16 0 0 1 18 2 M5.5 18 A12.5 12.5 0 0 1 18 5.5 M9 18 A9 9 0 0 1 18 9" fill="none" stroke="#111" stroke-width="1"/><circle cx="14.5" cy="15.5" r="1.5" fill="#111"/></svg>
<svg style="left:1735px;top:1045px" width="24" height="20" viewBox="0 0 24 20"><path d="M2 7 H6 L11 2.5 V17.5 L6 13 H2 Z" fill="none" stroke="#111" stroke-width="1.1"/><path d="M13.5 7.5 Q15 10 13.5 12.5 M16 5 Q19 10 16 15" fill="none" stroke="#111" stroke-width="1.1"/><path d="M19 2.5 Q23.5 10 19 17.5" fill="none" stroke="#999" stroke-width="1"/></svg>
<div id="k_time" class="t" style="left:1791px;top:1037px;font-size:14px;color:#111">14:55</div>
<div id="k_date" class="t" style="left:1771px;top:1059px;font-size:14px;color:#111">13/08/2022</div>
<svg style="left:1866px;top:1043px" width="34" height="34" viewBox="0 0 34 34"><path d="M2.5 1.5 H23 V16 H12 L8 20 V16 H2.5 Z" fill="#111"/><path d="M6 5.5 H19.5 M6 8.5 H19.5 M6 11.5 H19.5" stroke="#e0d8d8" stroke-width="1"/><circle cx="22.5" cy="21.5" r="10" fill="#d6d0d0" stroke="#888" stroke-width="1"/><text x="22.5" y="26.5" font-family="Liberation Sans" font-size="14" text-anchor="middle" fill="#111">1</text></svg>
<div class="a" style="left:1914px;top:1032px;width:1px;height:48px;background:#a8a4a4"></div>
<style>
#t_title{letter-spacing:-0.039px;margin-left:-0.90px}
#m_file{letter-spacing:-0.075px;margin-left:-1.12px}
#m_edit{letter-spacing:0.000px;margin-left:-0.45px}
#m_view{letter-spacing:-0.150px;margin-left:-0.23px}
#m_tools{letter-spacing:-0.225px;margin-left:0.45px}
#m_meas{letter-spacing:-0.225px;margin-left:-0.90px}
#m_hist{letter-spacing:0.188px;margin-left:-0.90px}
#m_util{letter-spacing:0.281px;margin-left:0.00px}
#m_help{letter-spacing:0.675px;margin-left:-1.12px}
#l_new{letter-spacing:-0.675px;margin-left:-0.90px}
#l_open{letter-spacing:-0.825px;margin-left:0.00px}
#l_save{letter-spacing:-0.900px;margin-left:-0.68px}
#l_sync{letter-spacing:-0.450px;margin-left:-0.90px}
#l_draft{letter-spacing:0.338px;margin-left:-0.45px}
#l_piece{letter-spacing:-0.619px;margin-left:-0.90px}
#l_layout{letter-spacing:-0.090px;margin-left:-1.58px}
#l_ndb{letter-spacing:-0.064px;margin-left:-0.90px}
#l_db{letter-spacing:-0.245px;margin-left:-0.90px}
#l_bf{letter-spacing:-0.245px;margin-left:-0.90px}
#l_undo{letter-spacing:-0.108px;margin-left:-0.18px}
#l_redo{letter-spacing:-0.465px;margin-left:-1.58px}
#l_zoom{letter-spacing:-0.612px;margin-left:-0.54px}
#z_in{letter-spacing:0.810px;margin-left:-0.90px}
#z_out{letter-spacing:-0.450px;margin-left:0.00px}
#z_11{letter-spacing:0.450px;margin-left:-0.90px}
#z_fit{letter-spacing:0.000px;margin-left:-0.90px}
#z_sel{letter-spacing:-0.129px;margin-left:0.00px}
#z_prev{letter-spacing:-0.257px;margin-left:-0.90px}
#z_area{letter-spacing:-0.900px;margin-left:0.00px}
#z_pan{letter-spacing:-0.450px;margin-left:-0.90px}
#f_font{letter-spacing:-0.242px;margin-left:-0.09px}
#f_size{letter-spacing:0.450px;margin-left:-1.17px}
#d_tb{letter-spacing:0.285px;margin-left:-0.18px}
#b_point{letter-spacing:0.000px;margin-left:-0.45px}
#b_line{letter-spacing:0.000px;margin-left:0.18px}
#b_curve{letter-spacing:-0.023px;margin-left:0.00px}
#b_arc{letter-spacing:0.450px;margin-left:0.00px}
#b_ops{letter-spacing:0.300px;margin-left:0.00px}
#b_piece{letter-spacing:0.000px;margin-left:-0.90px}
#d_pe{letter-spacing:0.054px;margin-left:-0.45px}
#d_gm{letter-spacing:-0.158px;margin-left:0.45px}
#g_title{letter-spacing:-0.222px;margin-left:0.18px}
#g_len{letter-spacing:-0.030px;margin-left:-0.09px}
#g_arc{letter-spacing:0.300px;margin-left:0.00px}
#g_arcv{letter-spacing:-0.390px;margin-left:0.00px}
#g_pl{letter-spacing:0.000px;margin-left:-0.90px}
#g_b7{letter-spacing:-0.720px;margin-left:0.00px}
#g_ok{letter-spacing:-1.080px;margin-left:-0.54px}
#g_cancel{letter-spacing:-0.522px;margin-left:-0.09px}
#g_apply{letter-spacing:-0.450px;margin-left:0.00px}
#s_h{letter-spacing:0.180px;margin-left:-0.90px}
#s_176{letter-spacing:-0.495px;margin-left:-0.36px}
#s_size{letter-spacing:-0.390px;margin-left:-0.58px}
#s_50{letter-spacing:-0.720px;margin-left:-0.18px}
#s_pos{letter-spacing:-0.177px;margin-left:0.45px}
#k_spot{letter-spacing:0.051px;margin-left:-0.90px}
#k_rec{letter-spacing:-0.321px;margin-left:-0.45px}
#k_shots{letter-spacing:-0.630px;margin-left:1.08px}
#k_bb{letter-spacing:-0.297px;margin-left:-0.45px}
#k_ss{letter-spacing:-0.364px;margin-left:-0.45px}
#k_time{letter-spacing:-0.473px;margin-left:0.09px}
#k_date{letter-spacing:0.390px;margin-left:0.09px}
</style>
</body></html>
